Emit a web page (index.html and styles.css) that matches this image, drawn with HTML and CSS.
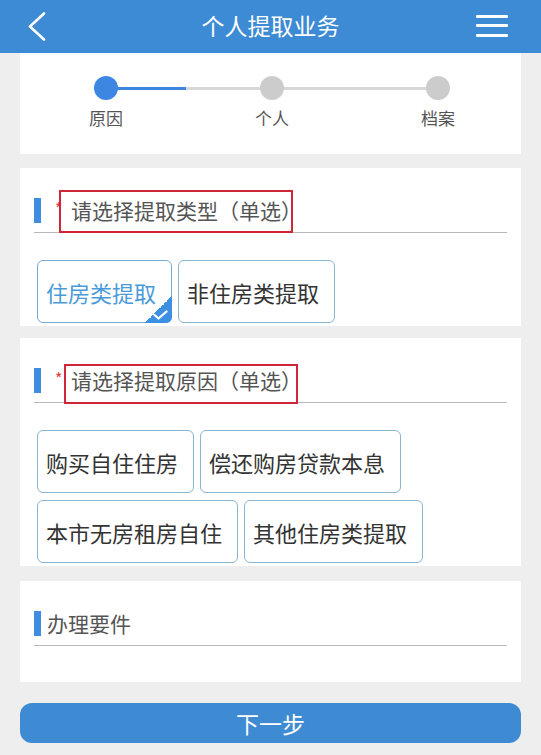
FILE: index.html
```html
<!DOCTYPE html>
<html lang="zh-CN">
<head>
    <meta charset="UTF-8">
    <meta name="viewport" content="width=device-width, initial-scale=1.0">
    <title>个人提取业务</title>
    <link rel="stylesheet" href="styles.css">
</head>
<body>
    <header class="topbar">
        <a class="topbar-back" href="#">
            <svg width="18" height="30" viewBox="0 0 18 30">
                <polyline points="16,1.5 2,14.5 16,27.5" fill="none" stroke="#fff" stroke-width="2.6" stroke-linecap="round" stroke-linejoin="round"/>
            </svg>
        </a>
        <h1 class="topbar-title">个人提取业务</h1>
        <button class="topbar-menu"><span></span><span></span><span></span></button>
    </header>

    <main class="page">
        <!-- Progress -->
        <section class="card steps">
            <div class="step active"><span class="dot"></span><span class="step-label">原因</span></div>
            <div class="step half"><span class="dot"></span><span class="step-label">个人</span></div>
            <div class="step"><span class="dot"></span><span class="step-label">档案</span></div>
        </section>

        <!-- Withdrawal type -->
        <section class="card field field-type">
            <div class="field-head">
                <span class="field-bar"></span>
                <span class="req">*</span>
                <span class="field-title mark-type">请选择提取类型（单选）</span>
            </div>
            <div class="options">
                <button class="option selected">住房类提取<span class="option-check"><svg width="27" height="27" viewBox="0 0 27 27"><polyline points="9.5,19 13.5,22.5 21.5,15.5" fill="none" stroke="#fff" stroke-width="2.3" stroke-linecap="round" stroke-linejoin="round"/></svg></span></button>
                <button class="option">非住房类提取</button>
            </div>
        </section>

        <!-- Withdrawal reason -->
        <section class="card field field-reason">
            <div class="field-head">
                <span class="field-bar"></span>
                <span class="req">*</span>
                <span class="field-title mark-reason">请选择提取原因（单选）</span>
            </div>
            <div class="options">
                <button class="option">购买自住住房</button>
                <button class="option">偿还购房贷款本息</button>
                <button class="option">本市无房租房自住</button>
                <button class="option">其他住房类提取</button>
            </div>
        </section>

        <!-- Requirements -->
        <section class="card field">
            <div class="field-head">
                <span class="field-bar"></span>
                <span class="field-title">办理要件</span>
            </div>
            <div class="requirements"></div>
        </section>

        <button class="next-btn">下一步</button>
    </main>
</body>
</html>
```

FILE: styles.css
```css
/* Base */
body {
    margin: 0;
    background-color: #eeeeee;
    font-family: "Noto Sans CJK SC", "Noto Sans", sans-serif;
    color: #333;
}

/* Top bar */
.topbar {
    height: 53px;
    background-color: #3d8bd4;
    display: grid;
    grid-template-columns: 1fr auto 1fr;
    align-items: center;
}

.topbar-back {
    justify-self: start;
    margin-left: 28px;
    display: flex;
}

.topbar-title {
    margin: 0 0 3px;
    font-size: 23px;
    font-weight: normal;
    line-height: 1;
    color: #fff;
}

.topbar-menu {
    justify-self: end;
    margin: 0 33px 2px 0;
    width: 32px;
    padding: 0;
    border: none;
    background: none;
    display: flex;
    flex-direction: column;
    gap: 6.5px;
}

.topbar-menu span {
    display: block;
    height: 3px;
    border-radius: 1px;
    background-color: #fff;
}

/* Page */
.page {
    padding: 0 20px;
}

.card {
    background-color: #fff;
    margin-bottom: 14px;
}

.field-type {
    margin-bottom: 12px;
}

.field-reason {
    margin-bottom: 15px;
}

/* Progress steps */
.steps {
    display: grid;
    grid-template-columns: repeat(3, 1fr);
    padding: 23px 0 24px 3px;
}

.step {
    position: relative;
    display: flex;
    flex-direction: column;
    align-items: center;
    gap: 6px;
}

.step + .step::before {
    content: '';
    position: absolute;
    top: 10.5px;
    left: -50%;
    width: 100%;
    height: 3px;
    background-color: #d8d8d8;
}

.step.half::before {
    background: linear-gradient(to right, #3d87e2 48%, #d8d8d8 48%);
}

.dot {
    position: relative;
    z-index: 1;
    width: 24px;
    height: 24px;
    border-radius: 50%;
    background-color: #cccccc;
}

.step.active .dot {
    background-color: #3d87e2;
}

.step-label {
    font-size: 17px;
    line-height: 24px;
    color: #555;
}

/* Form blocks */
.field {
    padding: 0 14px 3px;
}

.field-head {
    display: flex;
    align-items: center;
    height: 25px;
    padding: 30px 0 9px;
    border-bottom: 1px solid #b8b8b8;
}

.field-bar {
    width: 7px;
    height: 25px;
    margin-right: 6px;
    background-color: #3e8de0;
}

.req {
    align-self: flex-start;
    box-sizing: border-box;
    width: 24px;
    padding-left: 8px;
    margin-top: 2px;
    font-size: 16px;
    line-height: 16px;
    color: #e5393a;
}

.field-title {
    position: relative;
    font-size: 21px;
    line-height: 25px;
    color: #555;
}

/* red outline round the field prompts */
.mark-type::after,
.mark-reason::after {
    content: '';
    position: absolute;
    border: 2px solid #d0263a;
}

.mark-type::after {
    top: -8px;
    bottom: -10px;
    left: -12px;
    right: 9px;
}

.mark-reason::after {
    top: -4px;
    bottom: -11px;
    left: -7px;
    right: 4px;
}

.options {
    display: flex;
    flex-wrap: wrap;
    gap: 7px 6px;
    padding: 27px 0 0 3px;
}

.option {
    position: relative;
    box-sizing: border-box;
    height: 63px;
    padding: 0 15px 0 8px;
    display: flex;
    align-items: center;
    border: 1px solid #88b6d0;
    border-radius: 6px;
    background-color: #fff;
    font-family: inherit;
    font-size: 22px;
    color: #333;
}

.option.selected {
    color: #4a9ad8;
    border-color: #74acd6;
}

.option-check {
    position: absolute;
    right: -1px;
    bottom: -1px;
    width: 27px;
    height: 27px;
    display: flex;
    border-bottom-right-radius: 6px;
    background: linear-gradient(to bottom right, transparent 50%, #3d8fe3 50%);
}

.requirements {
    height: 33px;
}

/* Next step */
.next-btn {
    display: block;
    width: 100%;
    height: 40px;
    margin-top: 21px;
    border: none;
    border-radius: 12px;
    background-color: #3f8bd3;
    font-family: inherit;
    font-size: 23px;
    color: #fff;
}
```
